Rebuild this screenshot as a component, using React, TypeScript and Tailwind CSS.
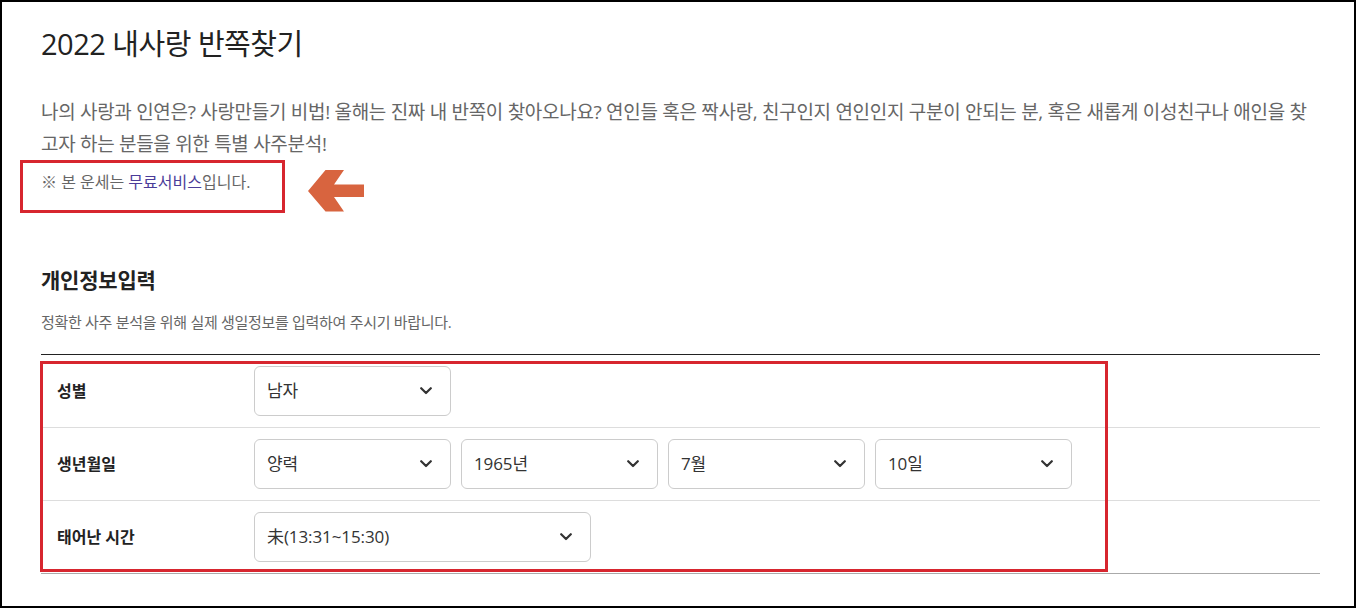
import React from 'react';

const font = { fontFamily: '"Open Sans", "Noto Sans CJK KR", "Noto Sans", sans-serif' };

function Chevron() {
  return (
    <svg width="12" height="8" viewBox="0 0 12 8" className="shrink-0">
      <path d="M1.2 1.2 L6 6 L10.8 1.2" fill="none" stroke="#333" strokeWidth="2.2" strokeLinecap="round" strokeLinejoin="round" />
    </svg>
  );
}

function SelectBox({ value, w = 'w-[197px]' }: { value: string; w?: string }) {
  return (
    <div className={`${w} h-[50px] flex items-center justify-between pl-[12px] pr-[18px] border border-[#cccccc] rounded-[6px] bg-white text-[17px] text-[#333] tracking-[-0.1px]`}>
      <span>{value}</span>
      <Chevron />
    </div>
  );
}

function Row({ label, children, last }: { label: string; children: React.ReactNode; last?: boolean }) {
  return (
    <div className={`flex items-center h-[73px] border-b ${last ? 'border-[#aaaaaa]' : 'border-[#dddddd]'}`}>
      <div className="w-[213px] pl-[16px] text-[16px] font-bold text-[#222]">{label}</div>
      <div className="flex gap-[10px]">{children}</div>
    </div>
  );
}

export default function App() {
  return (
    <div style={font} className="relative w-[1356px] h-[608px] border-2 border-black bg-white overflow-hidden">
      <div className="pl-[39px] pr-[34px] pt-[22px]">
        <h1 className="text-[29px] leading-[40px] text-[#222] tracking-[-0.5px]">2022 내사랑 반쪽찾기</h1>
        <p className="mt-[32px] text-[19px] leading-[32px] text-[#666] tracking-[-0.3px]">
          나의 사랑과 인연은? 사랑만들기 비법! 올해는 진짜 내 반쪽이 찾아오나요? 연인들 혹은 짝사랑, 친구인지 연인인지 구분이 안되는 분, 혹은 새롭게 이성친구나 애인을 찾고자 하는 분들을 위한 특별 사주분석!
        </p>
        <p className="mt-[6px] text-[16px] leading-[32px] text-[#666]">
          ※ 본 운세는 <span className="text-[#4b3c99]">무료서비스</span>입니다.
        </p>

        <h2 className="mt-[67px] text-[21px] leading-[30px] font-bold text-[#222] tracking-[-0.2px]">개인정보입력</h2>
        <p className="mt-[17px] text-[15px] leading-[20px] text-[#666] tracking-[-0.3px]">
          정확한 사주 분석을 위해 실제 생일정보를 입력하여 주시기 바랍니다.
        </p>

        <div className="mt-[22px] border-t border-[#222]">
          <Row label="성별">
            <SelectBox value="남자" />
          </Row>
          <Row label="생년월일">
            <SelectBox value="양력" />
            <SelectBox value="1965년" />
            <SelectBox value="7월" />
            <SelectBox value="10일" />
          </Row>
          <Row label="태어난 시간" last>
            <SelectBox value="未(13:31~15:30)" w="w-[337px]" />
          </Row>
        </div>
      </div>

      {/* annotation overlays */}
      <div className="absolute left-[18px] top-[158px] w-[265px] h-[53px] border-[3px] border-[#d7262f]" />
      <svg className="absolute left-[300px] top-[160px]" width="70" height="56" viewBox="0 0 70 56">
        <polygon points="6,29 23.5,8 42,8 32,22.5 62,22.5 62,35 32,35 42,49.5 23.5,49.5" fill="#d8643f" />
      </svg>
      <div className="absolute left-[38px] top-[359px] w-[1068px] h-[211px] border-[3px] border-[#d7262f]" />
    </div>
  );
}
